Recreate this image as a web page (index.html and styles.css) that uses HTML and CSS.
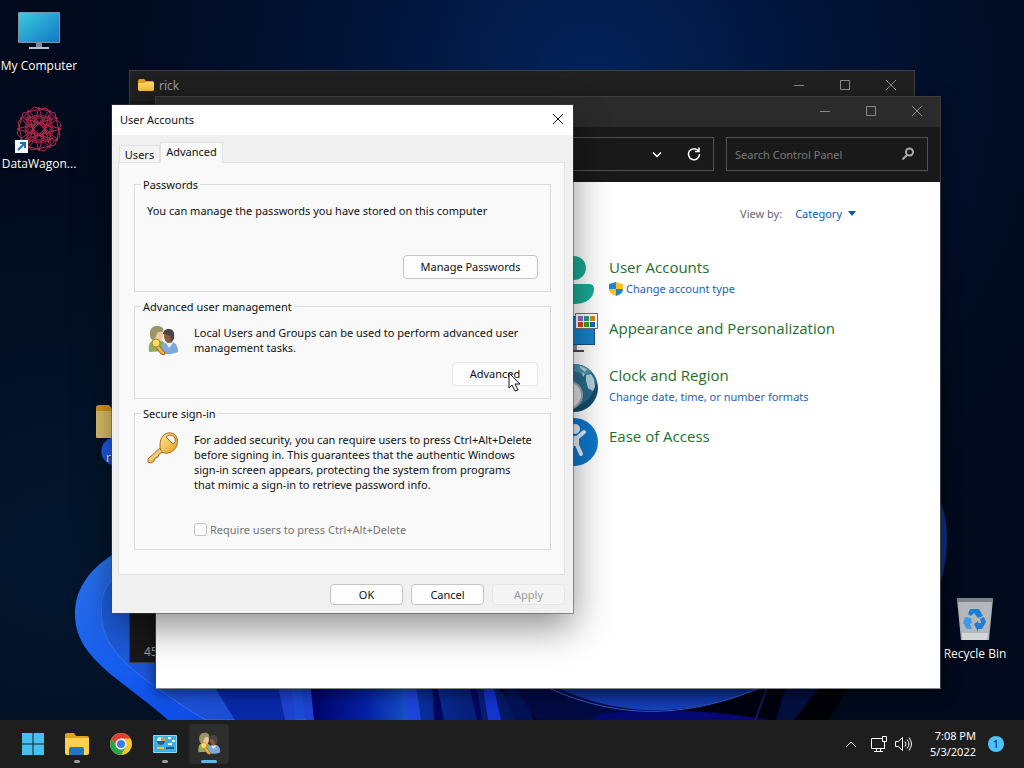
FILE: index.html
```html
<!DOCTYPE html>
<html lang="en">
<head>
<meta charset="utf-8">
<meta name="viewport" content="width=device-width, initial-scale=1">
<title>Desktop</title>
<link rel="stylesheet" href="styles.css">
</head>
<body>
<svg width="0" height="0" class="defs" aria-hidden="true">
  <defs>
    <linearGradient id="scr" x1="0" y1="0" x2="1" y2="1"><stop offset="0" stop-color="#3dc9e0"/><stop offset="1" stop-color="#1078c4"/></linearGradient>
    <linearGradient id="fold" x1="0" y1="0" x2="0" y2="1"><stop offset="0" stop-color="#ffdc6b"/><stop offset="1" stop-color="#f5bb36"/></linearGradient>
    <linearGradient id="teal" x1="0" y1="0" x2="1" y2="1"><stop offset="0" stop-color="#1cae8a"/><stop offset="1" stop-color="#1aa89a"/></linearGradient>
    <linearGradient id="gold" x1="0" y1="0" x2="1" y2="1"><stop offset="0" stop-color="#ffe9a0"/><stop offset="1" stop-color="#e79b1c"/></linearGradient>
    <symbol id="people" viewBox="0 0 32 32">
      <path d="M2 27c-1-9 1-12 8-12s9 3 9 11z" fill="#8fae5c"/>
      <path d="M14 28c0-8 3-11 9-11 6 0 8 4 8 10-4 2-12 3-17 1z" fill="#7fa9dd"/>
      <path d="M19 18l3 5 4-5z" fill="#e8f0fa"/>
      <ellipse cx="22" cy="11" rx="5" ry="7" fill="#8a5a3c"/>
      <path d="M16 9c0-6 10-7 11-1 1 5-1 8-3 9 0-4 0-6-3-7z" fill="#4b4543"/>
      <ellipse cx="11" cy="10" rx="5" ry="7" fill="#eec9a0"/>
      <path d="M4 14C1 7 4 1 10 1c5 0 7 2 6 6-4-1-6 0-7 4l-2 5z" fill="#9c9568"/>
      <path d="M10 18l8 10-1 2-3-1-6-8z" fill="#f0b43c" stroke="#9b641d"/>
      <circle cx="9" cy="18" r="4" fill="#f9dc71" stroke="#b98324"/>
    </symbol>
    <symbol id="folder" viewBox="0 0 18 14">
      <path d="M1 3q0-2 2-2h4l2 2h6q2 0 2 2v6q0 2-2 2H3q-2 0-2-2z" fill="#e2a020"/>
      <path d="M1 6q0-1 1-1h5l2-1h7q1 0 1 1v6q0 2-2 2H3q-2 0-2-2z" fill="url(#fold)"/>
    </symbol>
  </defs>
</svg>

<div class="screen">
  <main class="desktop">
    <svg class="wallpaper" viewBox="0 0 1024 720" preserveAspectRatio="none" aria-hidden="true">
      <defs>
        <radialGradient id="sky" gradientUnits="userSpaceOnUse" cx="590" cy="80" r="560"><stop offset="0" stop-color="#03225a"/><stop offset=".45" stop-color="#021336"/><stop offset=".8" stop-color="#010b20"/><stop offset="1" stop-color="#010a1c"/></radialGradient>
        <radialGradient id="low" gradientUnits="userSpaceOnUse" cx="60" cy="560" r="380"><stop offset="0" stop-color="#04172f"/><stop offset="1" stop-color="#04172f" stop-opacity="0"/></radialGradient>
        <linearGradient id="petal" x1="0" y1="0" x2="1" y2="1"><stop offset="0" stop-color="#2f7af0"/><stop offset=".5" stop-color="#1257ee"/><stop offset="1" stop-color="#0a35d8"/></linearGradient>
        <linearGradient id="inner" x1="0" y1="0" x2="1" y2="1"><stop offset="0" stop-color="#1d63e0"/><stop offset="1" stop-color="#1b45cf"/></linearGradient>
        <linearGradient id="glow" x1="0" y1="0" x2="1" y2="0"><stop offset="0" stop-color="#010266"/><stop offset=".5" stop-color="#0420a4"/><stop offset="1" stop-color="#1d5fd0"/></linearGradient>
        <linearGradient id="bowl" x1="0" y1="0" x2="0" y2="1"><stop offset="0" stop-color="#08257c"/><stop offset="1" stop-color="#1741bc"/></linearGradient>
        <linearGradient id="deep" x1="0" y1="0" x2="1" y2="0"><stop offset="0" stop-color="#0a2f9e"/><stop offset="1" stop-color="#021256"/></linearGradient>
      </defs>
      <rect width="1024" height="720" fill="url(#sky)"/>
      <rect width="1024" height="720" fill="url(#low)"/>
      <path d="M112 555C86 572 75 592 75 614c0 26 15 44 43 66 17 13 35 27 50 40h300V530z" fill="url(#petal)"/>
      <path d="M112 580c-10 10-12 24-10 42 3 22 20 40 44 58 22 16 42 30 60 40h200V560z" fill="url(#inner)" stroke="#4a84f4" stroke-opacity=".6"/>
      <path d="M112 438c-10 2-13 13-9 20 3 5 6 6 9 7z" fill="#1c5be6"/>
      <path d="M210 680h80v40h-55z" fill="#0828a8"/>
      <path d="M310 680h110v40H313z" fill="url(#glow)"/>
      <path d="M277 680h14l4 40h-10zM300 680h10l4 40h-8z" fill="#1c42cf"/>
      <path d="M403 680h12l6 40h-13z" fill="#1b45da"/>
      <path d="M415 680h75l38 40H421z" fill="url(#deep)"/>
      <path d="M432 680h4l8 40h-10zM468 680h8l6 40h-5z" fill="#010660"/>
      <path d="M482 680h10l9 40h-13z" fill="#1234cf"/>
      <path d="M500 680h340l-20 40H528z" fill="#01020f"/>
      <path d="M500 680h20l14 40h-20z" fill="#021256"/>
      <path d="M510 680h45c45 20 60 30 110 30l-20 10H537z" fill="#020a42"/>
      <path d="M600 714q80-10 170 6H590z" fill="#050872"/>
      <path d="M540 680c70 36 140 42 225 6z" fill="url(#bowl)"/>
      <path d="M540 684c70 34 140 38 225 2" fill="none" stroke="#3159c8" stroke-width="1"/>
      <path d="M768 686l-13 34" stroke="#171860" stroke-width="2"/>
      <path d="M822 686l-28 34h-18l10-34z" fill="#03103e"/>
      <path d="M820 686l-25 34h35l18-34z" fill="#000207"/>
      <path d="M936 490q20 40 3 100z" fill="#08318d"/>
    </svg>

    <div class="shortcut shortcut-computer">
      <svg width="44" height="40" viewBox="0 0 44 40" aria-hidden="true"><rect x="1" y="1" width="42" height="31" rx="1" fill="#7a96a4"/><rect x="2" y="2" width="40" height="29" fill="url(#scr)"/><path d="M19 32h6v5h-6z" fill="#7f8990"/><path d="M12 36h20v2H12z" fill="#bcc3c8"/></svg>
      <span>My Computer</span>
    </div>
    <div class="shortcut shortcut-wagon">
      <svg width="50" height="48" viewBox="0 0 50 48" aria-hidden="true">
        <g fill="none" stroke="#b42c49" stroke-width="1" transform="translate(25 23)">
          <path d="M-16-16L7-21 22-5 16 16-7 21-22 5zM16-16L21 7 5 22-16 16-21-7-5-22z"/>
          <path d="M0-22L10 14-19-11H19L-10 14z"/>
          <path d="M0 22L10-14-19 11H19L-10-14z"/>
          <path d="M-22 0L14-10-11 19V-19L14 10zM22 0L-14-10 11 19V-19L-14 10z"/>
          <g stroke="#9c2440"><circle r="14"/><circle cx="0" cy="-9" r="4"/><circle cx="9" cy="0" r="4"/><circle cx="-9" cy="0" r="4"/><circle cx="0" cy="9" r="4"/><circle cx="6" cy="-6" r="3"/><circle cx="-6" cy="-6" r="3"/><circle cx="6" cy="6" r="3"/><circle cx="-6" cy="6" r="3"/></g>
        </g>
        <rect x="1" y="34" width="13" height="13" fill="#f5f8fc"/><path d="M4 44l6-6M6 37h5v5" fill="none" stroke="#1d6fc4" stroke-width="2"/>
      </svg>
      <span>DataWagon...</span>
    </div>
    <div class="shortcut shortcut-folder">
      <svg width="44" height="40" viewBox="0 0 44 40" aria-hidden="true"><path d="M2 5q0-3 3-3h10l4 5h22v28H2z" fill="#d99a1c"/><path d="M2 8h40v24q0 3-3 3H5q-3 0-3-3z" fill="#ddc169"/></svg>
      <span>rick</span>
    </div>
    <div class="shortcut shortcut-bin">
      <svg width="38" height="44" viewBox="0 0 38 44" aria-hidden="true"><path d="M1 2l36 0-4 41H5z" fill="#aeb2b6"/><path d="M1 1h36v4H1z" fill="#7d8286"/><path d="M3 5h32l-3 31H6z" fill="#b4b8bc"/><path d="M6 36h26l-1 7H6z" fill="#d3d5d7"/>
        <g fill="#1c7fd6"><path d="M14 12h9l4 7-5 2-4-5-3 3-3-2z"/><path d="M9 20l6 1 1 5-2 1 2 5h-5l-4-6z" fill="#3c9be8"/><path d="M18 27l4-3v2h3l-1-4 4-2 2 5-4 7h-4v3z"/></g></svg>
      <span>Recycle Bin</span>
    </div>

    <section class="window explorer" aria-label="rick">
      <header class="titlebar">
        <svg class="title-icon" width="18" height="14" aria-hidden="true"><use href="#folder"/></svg>
        <span class="title">rick</span>
        <div class="controls">
          <button type="button" aria-label="Minimize"><svg width="12" height="12"><path d="M1 6.500h10"/></svg></button>
          <button type="button" aria-label="Maximize"><svg width="12" height="12"><path d="M1.500 1.500h9v9h-9z"/></svg></button>
          <button type="button" aria-label="Close"><svg width="12" height="12"><path d="M1 1l10 10M11 1L1 11"/></svg></button>
        </div>
      </header>
      <footer class="status">45</footer>
    </section>

    <section class="window panel" aria-label="Control Panel">
      <header class="titlebar">
        <div class="controls">
          <button type="button" aria-label="Minimize"><svg width="12" height="12"><path d="M1 6.500h10"/></svg></button>
          <button type="button" aria-label="Maximize"><svg width="12" height="12"><path d="M1.500 1.500h9v9h-9z"/></svg></button>
          <button type="button" aria-label="Close"><svg width="12" height="12"><path d="M1 1l10 10M11 1L1 11"/></svg></button>
        </div>
      </header>
      <div class="toolbar">
        <div class="address">
          <button type="button" aria-label="Previous locations"><svg width="14" height="14"><path d="M3 5.500l4 4 4-4"/></svg></button>
          <button type="button" aria-label="Refresh"><svg width="14" height="14"><path d="M11.500 4A5.500 5.500 0 1 0 12.500 7M12 .5V4.500H8"/></svg></button>
        </div>
        <div class="search">
          <input type="text" placeholder="Search Control Panel" aria-label="Search Control Panel">
          <svg width="14" height="14" viewBox="0 0 14 14" aria-hidden="true"><circle cx="8.500" cy="5" r="3.500"/><path d="M6 8l-4.500 4.500"/></svg>
        </div>
      </div>
      <div class="panel-body">
        <div class="view-by"><span>View by:</span><a href="#">Category <svg width="8" height="5" aria-hidden="true"><path d="M0 0h8L4 5z" fill="#0a5bb5"/></svg></a></div>
        <ul class="categories">
          <li>
            <svg width="48" height="50" viewBox="0 0 48 50" aria-hidden="true"><circle cx="24" cy="14" r="12" fill="url(#teal)"/><path d="M4 35q0-5 5-5h30q5 0 5 5c0 9-8 15-20 15S4 44 4 35z" fill="url(#teal)"/></svg>
            <div class="category"><h2><a href="#">User Accounts</a></h2>
              <a class="task" href="#"><svg width="14" height="14" viewBox="0 0 14 14" aria-hidden="true"><path d="M7 0L0 2v5h7z" fill="#2583c9"/><path d="M7 0l7 2v5H7z" fill="#f9c321"/><path d="M0 7c0 4 4 6 7 7V7z" fill="#f9c321"/><path d="M14 7c0 4-4 6-7 7V7z" fill="#2583c9"/></svg>Change account type</a></div>
          </li>
          <li>
            <svg width="48" height="48" viewBox="0 0 48 48" aria-hidden="true"><rect x="2" y="8" width="43" height="29" fill="#14507a"/><rect x="3" y="9" width="41" height="27" fill="#1782c8"/><path d="M20 37h7v5h-7z" fill="#84909a"/><path d="M13 42h21v2H13z" fill="#4a4a58"/><path d="M25.500 5.500h22v15h-22z" fill="#fff" stroke="#68707a"/><path d="M28 8h5v5h-5z" fill="#9868c8"/><path d="M34 8h5v5h-5z" fill="#169f88"/><path d="M40 8h5v5h-5z" fill="#d88820"/><path d="M28 14h5v5h-5z" fill="#d1481c"/><path d="M34 14h5v5h-5z" fill="#48a018"/><path d="M40 14h5v5h-5z" fill="#1769ba"/></svg>
            <div class="category category-single"><h2><a href="#">Appearance and Personalization</a></h2></div>
          </li>
          <li>
            <svg width="48" height="50" viewBox="0 0 48 50" aria-hidden="true"><circle cx="24" cy="26" r="24" fill="#286b8b"/><path d="M24 2a24 24 0 0 1 18 8l-8 3-10-4z" fill="#4d91ae"/><path d="M30 4l7 3-2 3-5-4zM36 13l5-1 3 5 1 8-2 4-5-3-2-7zM32 10l3 2-2 3z" fill="#b5d4df"/><path d="M47 21a24 24 0 0 1-23 29v-5c12-2 18-11 23-24z" fill="#184a68"/><ellipse cx="17" cy="33" rx="15" ry="14" fill="#dde2e4" stroke="#9ca6ac" stroke-width="2"/></svg>
            <div class="category"><h2><a href="#">Clock and Region</a></h2><a class="task" href="#">Change date, time, or number formats</a></div>
          </li>
          <li>
            <svg width="48" height="50" viewBox="0 0 48 50" aria-hidden="true"><circle cx="24" cy="26" r="24" fill="#0f77cc"/><circle cx="25" cy="13" r="5" fill="#e4f0fa"/><path d="M13 18l9 5v7l-4 10M34 16l-7 6 0 7 4 9M22 22h5" fill="none" stroke="#e4f0fa" stroke-width="4" stroke-linecap="round" stroke-linejoin="round"/><path d="M21 21h7v9h-7z" fill="#e4f0fa"/></svg>
            <div class="category category-single"><h2><a href="#">Ease of Access</a></h2></div>
          </li>
        </ul>
      </div>
    </section>

    <section class="dialog" role="dialog" aria-labelledby="dialog-title">
      <header class="dialog-title"><span id="dialog-title">User Accounts</span>
        <button type="button" aria-label="Close"><svg width="12" height="12"><path d="M1 1l10 10M11 1L1 11"/></svg></button></header>
      <div class="dialog-body">
        <div class="tabs" role="tablist">
          <button type="button" role="tab" aria-selected="false" class="tab">Users</button>
          <button type="button" role="tab" aria-selected="true" class="tab tab-active">Advanced</button>
        </div>
        <div class="tab-panel" role="tabpanel">
          <fieldset>
            <legend>Passwords</legend>
            <p>You can manage the passwords you have stored on this computer</p>
            <div class="group-action group-action-far"><button type="button" class="btn btn-wide">Manage Passwords</button></div>
          </fieldset>
          <fieldset>
            <legend>Advanced user management</legend>
            <div class="group-row">
              <svg width="32" height="32" aria-hidden="true"><use href="#people"/></svg>
              <p>Local Users and Groups can be used to perform advanced user<br>management tasks.</p>
            </div>
            <div class="group-action"><button type="button" class="btn btn-hover">Advanced</button></div>
          </fieldset>
          <fieldset>
            <legend>Secure sign-in</legend>
            <div class="group-row">
              <svg width="32" height="32" viewBox="0 0 32 32" aria-hidden="true"><path d="M14 15L1 27v3l3 1 3-2 1-3 3-1 1-3 6-3z" fill="url(#gold)" stroke="#a86a1a"/><path d="M4 28l11-10" stroke="#fff0b4" stroke-width="1"/><path d="M16 4c4-5 12-4 14 2s-2 14-9 15c-6 1-8-3-8-7 0-5 1-8 3-10z" fill="url(#gold)" stroke="#a86a1a"/><path d="M19 5c3-3 8-2 9 1s0 5-2 6z" fill="#f5f5f5" stroke="#a86a1a"/></svg>
              <p>For added security, you can require users to press Ctrl+Alt+Delete<br>before signing in. This guarantees that the authentic Windows<br>sign-in screen appears, protecting the system from programs<br>that mimic a sign-in to retrieve password info.</p>
            </div>
            <label class="check"><input type="checkbox" disabled>Require users to press Ctrl+Alt+Delete</label>
          </fieldset>
        </div>
        <div class="dialog-actions">
          <button type="button" class="btn">OK</button>
          <button type="button" class="btn">Cancel</button>
          <button type="button" class="btn" disabled>Apply</button>
        </div>
      </div>
    </section>

    <svg class="cursor" width="14" height="20" viewBox="0 0 14 20" aria-hidden="true"><path d="M1 1v15l3-3 3 6 3-1-3-6h5z" fill="#fff" stroke="#111"/></svg>
  </main>

  <footer class="taskbar">
    <nav class="apps" aria-label="Taskbar">
      <button type="button" class="app" aria-label="Start"><svg width="24" height="24" viewBox="0 0 24 24"><path d="M1 1h10.500v10.500H1zM12.500 1H23v10.500H12.500zM1 12.500h10.500V23H1zM12.500 12.500H23V23H12.500z" fill="#45c0f0"/></svg></button>
      <button type="button" class="app app-open" aria-label="File Explorer"><svg width="26" height="24" viewBox="0 0 26 24"><path d="M1 3q0-2 2-2h7l2 3h11q2 0 2 2v6H1z" fill="#e3a11b"/><path d="M1 6h24v15q0 2-2 2H3q-2 0-2-2z" fill="#fdd050"/><path d="M5 23v-6q0-2 2-2h11q2 0 2 2v6z" fill="#1b78c4"/></svg></button>
      <button type="button" class="app" aria-label="Chrome"><svg width="24" height="24" viewBox="0 0 24 24"><circle cx="12" cy="12" r="11" fill="#f8c72c"/><path d="M2.500 6.500a11 11 0 0 1 19 0H12L7.200 14.800z" fill="#df4232"/><path d="M2.500 6.500a11 11 0 0 0 9.500 16.500l4.800-8.300H7.200z" fill="#2ba24c"/><circle cx="12" cy="12" r="5.500" fill="#fff"/><circle cx="12" cy="12" r="4" fill="#3b7de0"/></svg></button>
      <button type="button" class="app app-open" aria-label="Control Panel"><svg width="26" height="22" viewBox="0 0 26 22"><rect x="1" y="2" width="24" height="18" rx="1" fill="#8ad8f5"/><rect x="2" y="3" width="22" height="16" fill="#3fb0dd"/><circle cx="9" cy="8" r="4" fill="#dff4fc"/><path d="M9 8V4a4 4 0 0 1 4 4z" fill="#e9952f"/><path d="M5 8h8a4 4 0 0 1-8 0z" fill="#16629c"/><path d="M16 5h3M20 8h3M16 11h4" stroke="#fff" stroke-width="2"/><path d="M5 15h7" stroke="#f2c43a" stroke-width="2"/><path d="M14 15h8" stroke="#135b96" stroke-width="2"/></svg></button>
      <button type="button" class="app app-open app-active" aria-label="User Accounts"><svg width="24" height="24"><use href="#people"/></svg></button>
    </nav>
    <div class="tray">
      <button type="button" aria-label="Show hidden icons"><svg width="14" height="14"><path d="M2 10l5-5 5 5"/></svg></button>
      <button type="button" aria-label="Network"><svg width="18" height="18"><path d="M12 3.500H1.500v10h13V10M4 16.500h9M6.500 14v2M10.500 14v2M12.500 1.500h4v5h-4zM14.500 7v7"/></svg></button>
      <button type="button" aria-label="Volume"><svg width="18" height="18"><path d="M1.500 6.500h3l4-4v13l-4-4h-3zM11 6.500q2 2.500 0 5M13 4.500q4 4.500 0 9M15 2.500q5 6.500 0 13"/></svg></button>
      <div class="clock"><span>7:08 PM</span><span>5/3/2022</span></div>
      <span class="badge">1</span>
    </div>
  </footer>
</div>
</body>
</html>
```

FILE: styles.css
```css
* { box-sizing: border-box; }
body {
  margin: 0;
  font: 11px/15px "Noto Sans", "Open Sans", sans-serif;
  color: #111;
}
button, input { font: inherit; color: inherit; }
button { border: 0; padding: 0; background: none; }
a { text-decoration: none; }
p, h2, ul { margin: 0; padding: 0; }
svg { flex: none; }
.defs { position: absolute; }

.screen {
  display: flex;
  flex-direction: column;
  height: 100vh;
  overflow: hidden;
}
.desktop { position: relative; flex: 1; min-height: 0; overflow: hidden; background: #010b22; }
.wallpaper { position: absolute; inset: 0; width: 100%; height: 100%; }

/* Desktop shortcuts */
.shortcut {
  position: absolute;
  display: flex;
  flex-direction: column;
  align-items: center;
  width: 78px;
  font-family: "Open Sans", sans-serif;
  font-size: 12px;
  line-height: 16px;
  color: #fff;
  white-space: nowrap;
  text-shadow: 0 1px 2px #000;
}
.shortcut-computer { left: 0; top: 11px; gap: 7px; }
.shortcut-wagon { left: 0; top: 106px; gap: 2px; }
.shortcut-folder { left: 77px; top: 403px; gap: 7px; }
.shortcut-bin { right: 10px; top: 597px; gap: 5px; }

/* Windows */
.window { position: absolute; display: flex; flex-direction: column; border: 1px solid #3c3e40; }
.titlebar { display: flex; align-items: center; height: 30px; padding-bottom: 2px; color: #9a9a9a; }
.title { margin-left: 4px; font-size: 12px; }
.title-icon { margin-left: 7px; }
.controls { display: flex; margin-left: auto; }
.controls button { width: 46px; height: 28px; display: grid; place-items: center; }
.controls svg, .dialog-title svg { fill: none; stroke: #8a8a8a; }
.explorer { left: 129px; right: 109px; top: 70px; bottom: 57px; background: #191919; }
.explorer .titlebar { background: #202020; }
.status { margin-top: auto; padding: 3px 14px; color: #aaa; font-size: 12px; }

.panel {
  left: 155px; right: 83px; top: 96px; bottom: 31px;
  background: #fff;
  border-bottom-color: #888;
  box-shadow: 0 4px 14px rgba(0, 0, 0, .5);
}
.panel .titlebar { background: #2b2b2b; }
.toolbar { display: flex; gap: 12px; padding: 10px 12px 11px 12px; background: #191919; }
.address, .search {
  display: flex;
  align-items: center;
  height: 34px;
  border: 1px solid #535353;
}
.address { flex: 1; justify-content: flex-end; gap: 23px; padding-right: 12px; }
.address svg { display: block; fill: none; stroke: #fff; stroke-width: 1.5; }
.search { width: 202px; padding: 0 12px 0 8px; }
.search input { flex: 1; min-width: 0; padding: 0; border: 0; outline: 0; background: none; color: #ccc; font-size: 11px; }
.search input::placeholder { color: #7b7b7b; opacity: 1; }
.search svg { fill: none; stroke: #aaa; stroke-width: 2; }
.panel-body { flex: 1; overflow: hidden; }
.view-by { display: flex; justify-content: flex-end; gap: 13px; padding: 24px 84px 0 0; color: #666; }
.view-by a { display: flex; align-items: center; gap: 6px; color: #0a5bb5; }
.categories {
  display: flex;
  flex-direction: column;
  gap: 6px;
  margin: 33px 0 0 50%;
  padding-left: 2px;
  list-style: none;
}
.categories li { display: flex; gap: 11px; height: 48px; }
.category { padding-top: 2px; }
.category-single { padding-top: 9px; }
.category h2 { font: 400 15px/22px "Open Sans", sans-serif; }
.category h2 a { color: #1d6f2c; }
.task { display: flex; align-items: center; gap: 3px; line-height: 22px; color: #1a62b8; }

/* Dialog */
.dialog {
  position: absolute;
  left: 112px; top: 105px;
  width: 461px;
  background: #f0f0f0;
  box-shadow: 0 0 0 1px rgba(70, 70, 70, .5), 0 14px 36px rgba(0, 0, 0, .45);
}
.dialog-title { display: flex; align-items: center; justify-content: space-between; height: 30px; padding: 0 9px 2px 8px; background: #fff; }
.dialog-title svg { display: block; stroke: #111; }
.dialog-body { padding: 7px 8px 8px 6px; }
.tabs { display: flex; align-items: flex-end; }
.tab { height: 17px; width: 41px; margin-left: 1px; border: 1px solid #e2e2e2; border-bottom: 0; background: #f4f4f4; }
.tab-active { position: relative; width: 63px; height: 21px; margin: 0 0 -1px; background: #f9f9f9; padding-bottom: 3px; }
.tab-panel { display: flex; flex-direction: column; gap: 7px; padding: 14px 13px 24px 15px; background: #f9f9f9; border: 1px solid #e2e2e2; }
fieldset { margin: 0; min-width: 0; padding: 11px 12px 12px; border: 1px solid #dcdcdc; }
legend { margin-left: -6px; padding: 0 2px; }
.group-action { display: flex; justify-content: flex-end; margin-top: 7px; }
.group-action-far { margin-top: 37px; }
.group-row { display: flex; gap: 15px; }
.group-row svg { margin-bottom: -2px; }
.btn {
  width: 73px;
  height: 21px;
  border: 1px solid #c4c4c4;
  border-radius: 4px;
  background: #fdfdfd;
}
.group-action .btn { width: 86px; height: 24px; padding-bottom: 2px; }
.group-action .btn-wide { width: 135px; }
.btn-hover { border-color: #e8e8e8; }
.btn:disabled { color: #9a9a9a; border-color: #e6e6e6; background: #f4f4f4; }
.check { display: flex; align-items: center; gap: 3px; margin: 30px 0 0 47px; color: #767676; }
.check input { appearance: none; width: 13px; height: 13px; margin: 0; border: 1px solid #c2c2c2; border-radius: 3px; background: #fbfbfb; }
.dialog-actions { display: flex; justify-content: flex-end; gap: 8px; margin-top: 9px; }

.cursor { position: absolute; left: 508px; top: 372px; }

/* Taskbar */
.taskbar { display: flex; justify-content: space-between; align-items: center; height: 48px; padding: 0 20px 0 13px; background: #1e1e1f; color: #fff; }
.apps { display: flex; gap: 4px; }
.app { position: relative; display: grid; place-items: center; width: 40px; height: 40px; border-radius: 4px; }
.app-active { background: #2d2d2d; }
.app-open::after { content: ""; position: absolute; bottom: 1px; left: 50%; margin-left: -3px; width: 6px; height: 3px; border-radius: 2px; background: #999; }
.app-active::after { width: 16px; margin-left: -8px; background: #58b8ea; }
.tray { display: flex; align-items: center; }
.tray button { margin-right: 6px; }
.tray button:first-child { margin-right: 12px; }
.tray svg { display: block; fill: none; stroke: #fff; }
.clock { display: flex; flex-direction: column; align-items: flex-end; margin: 0 12px; line-height: 16px; }
.badge { width: 16px; height: 16px; border-radius: 50%; background: #4cc2ff; color: #123; text-align: center; line-height: 16px; }
```
